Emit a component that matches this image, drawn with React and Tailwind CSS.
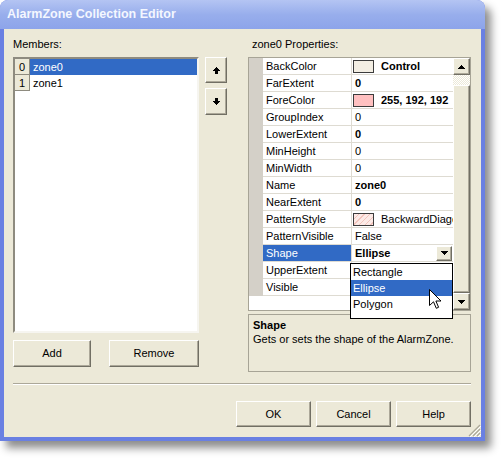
import React from "react";

const raised =
  "bg-[#ECE9D8] border border-t-white border-l-white border-r-[#716F64] border-b-[#716F64] shadow-[inset_-1px_-1px_0_#ACA899]";

function Btn({ children, className = "" }) {
  return (
    <div className={`flex items-center justify-center ${raised} ${className}`}>
      {children}
    </div>
  );
}

function UpArrow() {
  return (
    <svg width="7" height="7" viewBox="0 0 7 7" shapeRendering="crispEdges">
      <rect x="3" y="0" width="1" height="1" fill="#000" />
      <rect x="2" y="1" width="3" height="1" fill="#000" />
      <rect x="1" y="2" width="5" height="1" fill="#000" />
      <rect x="0" y="3" width="7" height="1" fill="#000" />
      <rect x="2" y="4" width="3" height="3" fill="#000" />
    </svg>
  );
}
function DownArrow() {
  return (
    <svg width="7" height="7" viewBox="0 0 7 7" shapeRendering="crispEdges">
      <rect x="2" y="0" width="3" height="3" fill="#000" />
      <rect x="0" y="3" width="7" height="1" fill="#000" />
      <rect x="1" y="4" width="5" height="1" fill="#000" />
      <rect x="2" y="5" width="3" height="1" fill="#000" />
      <rect x="3" y="6" width="1" height="1" fill="#000" />
    </svg>
  );
}
function Tri({ up }) {
  return (
    <svg width="7" height="4" viewBox="0 0 7 4" shapeRendering="crispEdges">
      {up ? (
        <>
          <rect x="3" y="0" width="1" height="1" fill="#000" />
          <rect x="2" y="1" width="3" height="1" fill="#000" />
          <rect x="1" y="2" width="5" height="1" fill="#000" />
          <rect x="0" y="3" width="7" height="1" fill="#000" />
        </>
      ) : (
        <>
          <rect x="0" y="0" width="7" height="1" fill="#000" />
          <rect x="1" y="1" width="5" height="1" fill="#000" />
          <rect x="2" y="2" width="3" height="1" fill="#000" />
          <rect x="3" y="3" width="1" height="1" fill="#000" />
        </>
      )}
    </svg>
  );
}

const rows = [
  { n: "BackColor", v: "Control", b: true, sw: "bg-[#F3EEE3]" },
  { n: "FarExtent", v: "0", b: true },
  { n: "ForeColor", v: "255, 192, 192", b: true, sw: "bg-[#FFC0C0]" },
  { n: "GroupIndex", v: "0" },
  { n: "LowerExtent", v: "0", b: true },
  { n: "MinHeight", v: "0" },
  { n: "MinWidth", v: "0" },
  { n: "Name", v: "zone0", b: true },
  { n: "NearExtent", v: "0", b: true },
  {
    n: "PatternStyle",
    v: "BackwardDiagonal",
    sw: "bg-[repeating-linear-gradient(135deg,#FCEAE6_0px,#FCEAE6_3px,#F2C4BC_3px,#F2C4BC_4px)]",
  },
  { n: "PatternVisible", v: "False" },
  { n: "Shape", v: "Ellipse", b: true, sel: true },
  { n: "UpperExtent", v: "" },
  { n: "Visible", v: "" },
];

function PropRow({ r }) {
  return (
    <div className="flex h-[17px] border-b border-[#DEDBD2] min-w-0">
      <div
        className={`w-[89px] shrink-0 pl-[3px] leading-[16px] border-r border-[#DEDBD2] whitespace-nowrap overflow-hidden ${
          r.sel ? "bg-[#316AC5] text-white" : "bg-white text-black"
        }`}
      >
        {r.n}
      </div>
      <div className="flex-1 min-w-0 flex items-center bg-white overflow-hidden whitespace-nowrap">
        {r.sw ? (
          <>
            <div className={`ml-[1px] w-[21px] h-[13px] shrink-0 border border-[#3C3C3C] ${r.sw}`} />
            <span className={`ml-[7px] leading-[16px] ${r.b ? "font-bold" : ""}`}>{r.v}</span>
          </>
        ) : (
          <span className={`pl-[3px] leading-[16px] flex-1 min-w-0 ${r.b ? "font-bold" : ""}`}>{r.v}</span>
        )}
        {r.sel && (
          <div className={`w-[16px] h-[15px] mr-[1px] shrink-0 flex items-center justify-center ${raised}`}>
            <Tri />
          </div>
        )}
      </div>
    </div>
  );
}

export default function App() {
  return (
    <div className="w-[503px] h-[458px] bg-white relative font-['Liberation_Sans',Arial,sans-serif] text-[11px] text-black overflow-hidden">
      <div className="w-[485px] h-[441px] flex flex-col rounded-t-[8px] bg-[#6A80E2] shadow-[6px_7px_9px_rgba(0,0,0,0.45)] relative">
        {/* title */}
        <div className="h-[29px] shrink-0 rounded-t-[8px] bg-gradient-to-b from-[#B4C4F3] via-[#98AEEC] to-[#8DA4EA] pl-[7px] flex items-center text-[12.5px] font-bold text-[#F4F7FF]">
          AlarmZone Collection Editor
        </div>
        {/* body */}
        <div className="flex-1 mx-[4px] mb-[4px] bg-[#ECE9D8] pl-[9px] pr-[10px] pt-[8px] flex flex-col">
          <div className="flex items-start">
            {/* left column */}
            <div className="w-[186px] flex flex-col">
              <div className="h-[20px] leading-[14px]">Members:</div>
              <div className="h-[276px] bg-white border-2 border-t-[#8E8B7F] border-l-[#8E8B7F] border-r-[#F6F5F0] border-b-[#F6F5F0] flex flex-col">
                <div className="flex h-[16px]">
                  <div className="w-[15px] bg-[#ECE9D8] border-r border-b border-[#8E8B7F] text-center leading-[16px]">0</div>
                  <div className="flex-1 bg-[#316AC5] text-white pl-[3px] leading-[16px]">zone0</div>
                </div>
                <div className="flex h-[16px]">
                  <div className="w-[15px] bg-[#ECE9D8] border-r border-b border-[#8E8B7F] text-center leading-[16px]">1</div>
                  <div className="flex-1 pl-[3px] leading-[16px]">zone1</div>
                </div>
              </div>
              <div className="flex mt-[7px]">
                <Btn className="w-[78px] h-[27px]">Add</Btn>
                <Btn className="w-[90px] h-[27px] ml-[18px]">Remove</Btn>
              </div>
            </div>
            {/* arrows */}
            <div className="ml-[6px] pt-[20px] flex flex-col">
              <Btn className="w-[22px] h-[26px]">
                <UpArrow />
              </Btn>
              <Btn className="w-[22px] h-[27px] mt-[5px]">
                <DownArrow />
              </Btn>
            </div>
            {/* right column */}
            <div className="ml-[21px] w-[223px] flex flex-col">
              <div className="h-[20px] leading-[14px] pl-[4px]">zone0 Properties:</div>
              <div className="h-[254px] border border-[#A7A496] flex bg-white">
                <div className="w-[204px] shrink-0 flex flex-col overflow-hidden">
                  <div className="flex">
                    <div className="w-[14px] shrink-0 bg-[#D4D0C8]" />
                    <div className="flex-1 min-w-0 flex flex-col">
                      {rows.map((r) => (
                        <PropRow key={r.n} r={r} />
                      ))}
                    </div>
                  </div>
                  <div className="flex-1 bg-white" />
                </div>
                {/* scrollbar */}
                <div className="w-[17px] shrink-0 flex flex-col">
                  <div className={`h-[17px] flex items-center justify-center ${raised}`}>
                    <Tri up />
                  </div>
                  <div className="h-[10px] bg-[repeating-conic-gradient(#ECE9D8_0%_25%,#FFFFFF_0%_50%)] bg-[length:2px_2px]" />
                  <div className={`flex-1 ${raised}`} />
                  <div className={`h-[17px] flex items-center justify-center ${raised}`}>
                    <Tri />
                  </div>
                </div>
              </div>
              <div className="mt-[3px] h-[58px] border border-[#A7A496] px-[4px] pt-[3px] leading-[14px]">
                <div className="font-bold">Shape</div>
                <div>Gets or sets the shape of the AlarmZone.</div>
              </div>
            </div>
          </div>
          {/* separator */}
          <div className="mt-[11px] h-[2px] border-t border-[#ACA899] border-b border-b-white" />
          {/* bottom buttons */}
          <div className="mt-[16px] flex justify-end gap-[5px]">
            <Btn className="w-[75px] h-[26px]">OK</Btn>
            <Btn className="w-[75px] h-[26px]">Cancel</Btn>
            <Btn className="w-[75px] h-[26px]">Help</Btn>
          </div>
        </div>
        {/* resize grip */}
        <svg className="absolute right-[4px] bottom-[4px]" width="13" height="13" viewBox="0 0 13 13">
          <path d="M12 1 L1 12 M12 5 L5 12 M12 9 L9 12" stroke="#ACA899" strokeWidth="1.2" />
          <path d="M13 2 L2 13 M13 6 L6 13 M13 10 L10 13" stroke="#FFFFFF" strokeWidth="1" />
        </svg>
      </div>

      {/* dropdown list */}
      <div className="absolute left-[350px] top-[263px] w-[103px] h-[56px] bg-white border border-black">
        <div className="h-[16px] leading-[16px] pl-[2px]">Rectangle</div>
        <div className="h-[16px] leading-[16px] pl-[2px] bg-[#316AC5] text-white">Ellipse</div>
        <div className="h-[16px] leading-[16px] pl-[2px]">Polygon</div>
      </div>

      {/* mouse cursor */}
      <svg className="absolute left-[429px] top-[289px]" width="13" height="21" viewBox="0 0 13 21">
        <path
          d="M0.5 0.5 L0.5 16.5 L4.5 12.8 L7.3 19.3 L9.6 18.3 L6.9 12 L12 12 Z"
          fill="#FFFFFF"
          stroke="#000"
          strokeWidth="1"
          strokeLinejoin="miter"
        />
      </svg>
    </div>
  );
}
